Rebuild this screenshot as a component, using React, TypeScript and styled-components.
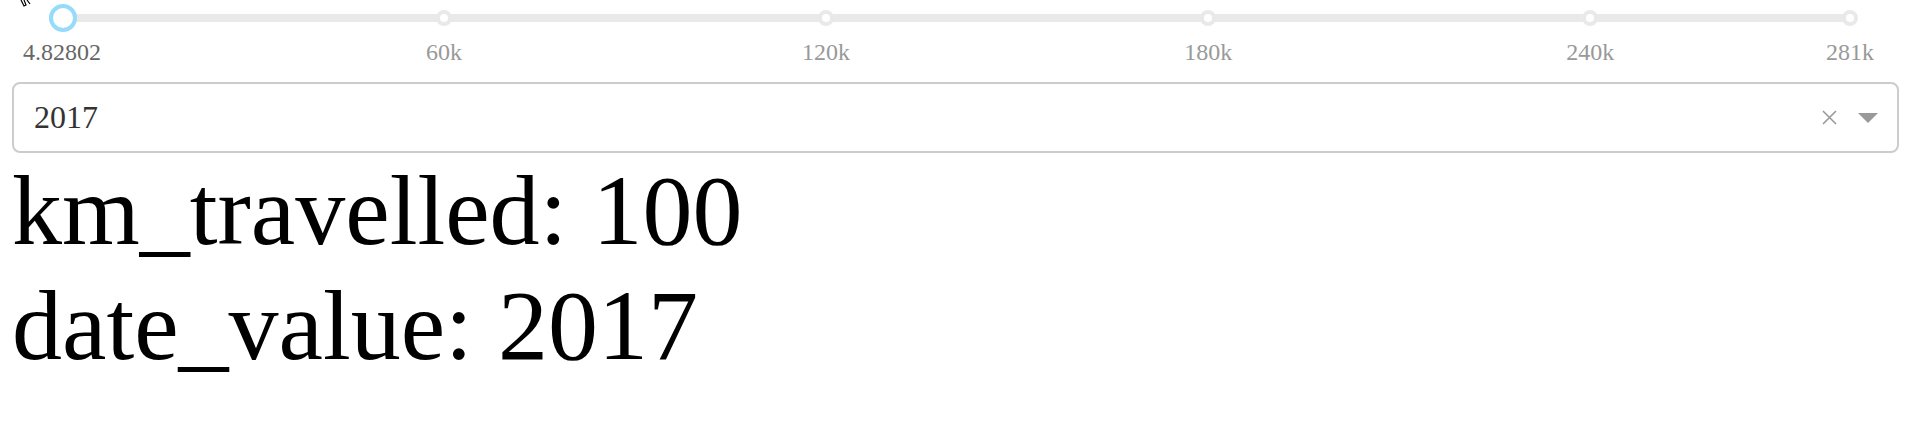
import React from "react";
import styled, { createGlobalStyle } from "styled-components";

const GlobalStyle = createGlobalStyle`
  html, body {
    margin: 0;
    padding: 0;
    background: #fff;
  }
  body {
    font-family: "Liberation Serif", "Times New Roman", serif;
  }
`;

const Page = styled.div`
  position: relative;
  padding: 0 14px 0 12px;
`;

const SliderBox = styled.div`
  height: 82px;
  padding: 0 49px 0 50px;
  box-sizing: border-box;
`;

const Track = styled.div`
  position: relative;
  height: 100%;
`;

const Rail = styled.div`
  position: absolute;
  left: 0;
  right: 0;
  top: 14px;
  height: 8px;
  border-radius: 4px;
  background: #e9e9e9;
`;

const Dot = styled.span`
  position: absolute;
  top: 10px;
  width: 16px;
  height: 16px;
  margin-left: -8px;
  box-sizing: border-box;
  border: 4px solid #e9e9e9;
  border-radius: 50%;
  background: #fff;
`;

const Handle = styled.span`
  position: absolute;
  top: 4px;
  width: 28px;
  height: 28px;
  margin-left: -14px;
  box-sizing: border-box;
  border: 4px solid #96dbfa;
  border-radius: 50%;
  background: #fff;
`;

const MarkLabel = styled.span<{ $active?: boolean }>`
  position: absolute;
  top: 39px;
  transform: translateX(-50%);
  font-size: 24px;
  white-space: nowrap;
  color: ${(p) => (p.$active ? "#666" : "#999")};
`;

const Select = styled.div`
  display: flex;
  align-items: center;
  height: 71px;
  box-sizing: border-box;
  border: 2px solid #ccc;
  border-radius: 8px;
  padding: 0 19px 0 20px;
  background: #fff;
`;

const Value = styled.div`
  flex: 1;
  font-size: 32px;
  color: #333;
`;

const Controls = styled.div`
  display: flex;
  align-items: center;
  gap: 21px;
`;

const Output = styled.div`
  font-size: 100px;
  color: #000;
`;

const Cursor = styled.svg`
  position: absolute;
  left: 19px;
  top: 0;
`;

const MIN = 4.82802;
const MAX = 280800;

const marks = [
  { value: MIN, label: "4.82802" },
  { value: 60000, label: "60k" },
  { value: 120000, label: "120k" },
  { value: 180000, label: "180k" },
  { value: 240000, label: "240k" },
  { value: MAX, label: "281k" },
];

const pct = (v: number) => `${((v - MIN) / (MAX - MIN)) * 100}%`;

const App = () => {
  const value = 100;

  return (
    <Page>
      <GlobalStyle />
      <SliderBox>
        <Track>
          <Rail />
          {marks.map((m) => (
            <Dot key={m.label} style={{ left: pct(m.value) }} />
          ))}
          <Handle style={{ left: pct(value) }} />
          {marks.map((m) => (
            <MarkLabel
              key={m.label}
              $active={m.value <= value}
              style={{ left: pct(m.value) }}
            >
              {m.label}
            </MarkLabel>
          ))}
        </Track>
      </SliderBox>

      <Select>
        <Value>2017</Value>
        <Controls>
          <svg width="15" height="15" viewBox="0 0 15 15">
            <path d="M1 1 L14 14 M14 1 L1 14" stroke="#999" strokeWidth="1.6" />
          </svg>
          <svg width="20" height="10" viewBox="0 0 20 10">
            <path d="M0 0 H20 L10 10 Z" fill="#999" />
          </svg>
        </Controls>
      </Select>

      <Output>km_travelled: {value}</Output>
      <Output>date_value: 2017</Output>

      <Cursor width="14" height="8" viewBox="0 0 14 8">
        <path d="M2 0 L5 6 L7 5 L5 0 M8 0 L11 4" stroke="#000" strokeWidth="1.2" fill="#fff" />
      </Cursor>
    </Page>
  );
};

export default App;
